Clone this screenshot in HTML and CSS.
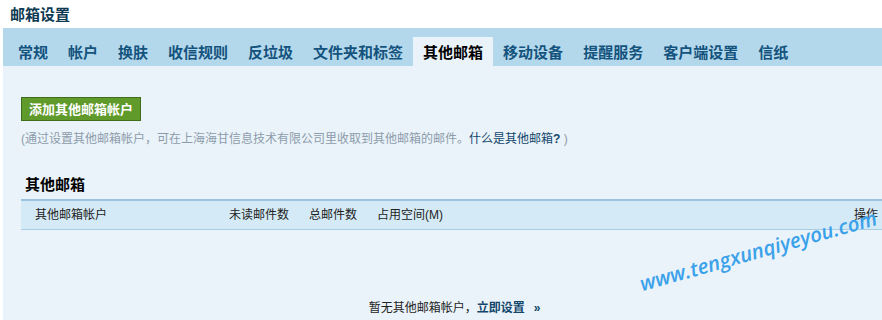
FILE: index.html
```html
<!DOCTYPE html>
<html lang="zh-CN">
<head>
    <meta charset="UTF-8">
    <title>邮箱设置</title>
    <link rel="stylesheet" href="styles.css">
</head>
<body>
    <div class="wrap">
        <h1 class="title">邮箱设置</h1>
        <div class="tabs">
            <a href="javascript:;">常规</a>
            <a href="javascript:;">帐户</a>
            <a href="javascript:;">换肤</a>
            <a href="javascript:;">收信规则</a>
            <a href="javascript:;">反垃圾</a>
            <a href="javascript:;">文件夹和标签</a>
            <a href="javascript:;" class="active">其他邮箱</a>
            <a href="javascript:;">移动设备</a>
            <a href="javascript:;">提醒服务</a>
            <a href="javascript:;">客户端设置</a>
            <a href="javascript:;">信纸</a>
        </div>
        <div class="content">
            <a href="javascript:;" class="btn_add">添加其他邮箱帐户</a>
            <p class="hint">(通过设置其他邮箱帐户，可在上海海甘信息技术有限公司里收取到其他邮箱的邮件。<a href="javascript:;">什么是其他邮箱<b>?</b></a> )</p>
            <h2 class="sub_title">其他邮箱</h2>
            <div class="thead">
                <span class="c_name">其他邮箱帐户</span>
                <span class="c_unread">未读邮件数</span>
                <span class="c_total">总邮件数</span>
                <span class="c_space">占用空间(M)</span>
                <span class="c_op">操作</span>
            </div>
            <div class="empty">
                暂无其他邮箱帐户，<a href="javascript:;">立即设置</a><span class="arrow">»</span>
            </div>
            <div class="mark">www.tengxunqiyeyou.com</div>
        </div>
    </div>
</body>
</html>
```

FILE: styles.css
```css
* {
    margin: 0;
    padding: 0;
}

body {
    font-family: "Liberation Sans", "Noto Sans CJK SC", sans-serif;
    font-size: 12px;
    background: #fff;
}

a {
    text-decoration: none;
}

.wrap {
    margin-left: 3px;
    height: 320px;
    overflow: hidden;
}

.title {
    height: 28px;
    line-height: 29px;
    padding-left: 7px;
    font-size: 15px;
    font-weight: bold;
    color: #0d3a52;
}

.tabs {
    display: flex;
    height: 38px;
    padding: 0 0 0 5px;
    background: #b3d8eb;
    align-items: flex-end;
}

.tabs a {
    height: 29px;
    line-height: 31px;
    padding: 0 10px;
    font-size: 15px;
    font-weight: bold;
    color: #13537e;
}

.tabs a.active {
    background: #eaf3f9;
    color: #000;
}

.content {
    position: relative;
    height: 254px;
    padding: 31px 0 0 18px;
    background: #eaf3f9;
}

.btn_add {
    display: inline-block;
    height: 22px;
    line-height: 23px;
    padding: 0 7px;
    border: 1px solid #3f6d1a;
    background: #5f9a2a;
    color: #fff;
    font-size: 13px;
    font-weight: bold;
}

.hint {
    margin-top: 9px;
    line-height: 18px;
    color: #8d9cab;
}

.hint a {
    color: #12466b;
}

.sub_title {
    margin-top: 27px;
    padding-left: 4px;
    height: 24px;
    line-height: 20px;
    font-size: 15px;
    font-weight: bold;
    color: #000;
}

.thead {
    display: flex;
    height: 28px;
    line-height: 28px;
    border-top: 2px solid #9ac4de;
    border-bottom: 1px solid #a9cde3;
    background: #d4eaf6;
    color: #222;
}

.thead span {
    flex: none;
}

.c_name {
    width: 194px;
    padding-left: 14px;
}

.c_unread {
    width: 80px;
}

.c_total {
    width: 68px;
}

.c_space {
    flex: 1 !important;
}

.c_op {
    padding-right: 4px;
}

.empty {
    margin-top: 68px;
    text-align: center;
    color: #222;
    padding-left: 6px;
}

.empty a {
    color: #12466b;
    font-weight: bold;
}

.empty .arrow {
    margin-left: 9px;
    color: #12466b;
    font-weight: bold;
}

.mark {
    position: absolute;
    left: 641px;
    top: 203px;
    font-family: "Open Sans", "DejaVu Sans", sans-serif;
    font-size: 20.5px;
    font-weight: 600;
    font-style: italic;
    color: #3aa1ea;
    transform: rotate(-15.8deg);
    transform-origin: left bottom;
    white-space: nowrap;
}
```
